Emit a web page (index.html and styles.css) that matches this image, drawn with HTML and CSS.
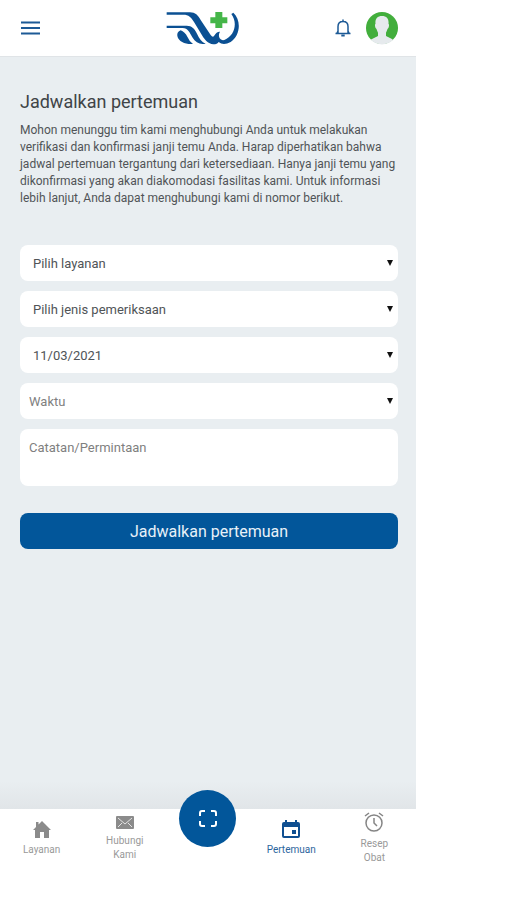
FILE: index.html
```html
<!DOCTYPE html>
<html lang="id">
<head>
<meta charset="utf-8">
<meta name="viewport" content="width=device-width, initial-scale=1">
<title>Jadwalkan pertemuan</title>
<link rel="stylesheet" href="styles.css">
</head>
<body>
<div class="app">
  <header class="topbar">
    <button class="icon-button" type="button" aria-label="Menu">
      <svg width="20" height="14" viewBox="0 0 20 14" fill="none" stroke="#1d5a96" stroke-width="2"><path d="M1 1.5H20M1 7H20M1 12.5H20"/></svg>
    </button>
    <a class="logo" href="#" aria-label="Beranda">
      <svg width="74" height="34" viewBox="46 33 222 102">
        <g fill="#0b5093">
          <path d="M48 37H118C134 37 142 46 150 60L180 105Q186 113 190 108Q198 94 208 95Q202 104 207 115Q211 122 221 120C252 108 262 68 242 42L248 38C272 60 270 105 240 126Q218 138 204 126Q200 133 188 133C172 131 164 122 154 106L130 66C122 52 114 44 98 44H48Z"/>
          <path d="M48 77H108C124 77 132 86 139 101C146 116 153 126 165 131C148 135 135 128 125 112C117 98 112 84 96 84H48Z"/>
          <path d="M90 91C98 94 106 102 110 110Q116 124 127 132C106 134 84 126 80 108Q78 96 90 91Z"/>
        </g>
        <path fill="#45b649" d="M194 36H215V52H230V70H215V84H194V70H179V52H194Z"/>
      </svg>
    </a>
    <div class="actions">
      <button class="icon-button" type="button" aria-label="Notifikasi">
        <svg width="16" height="20" viewBox="0 0 16 20" fill="none" stroke="#1d5a96" stroke-width="1.500"><path d="M3 15V8.500C3 5.500 5 3.500 8 3.500S13 5.500 13 8.500V15M.5 15.500H15.500M2 15L3 13M14 15L13 13M8 3.500V1.500"/><path d="M6.300 17.500H9.700" stroke-width="2"/></svg>
      </button>
      <button class="icon-button" type="button" aria-label="Profil">
        <svg width="32" height="34" viewBox="0 0 32 34">
          <circle cx="16" cy="17" r="16" fill="#42ae3c"/>
          <path fill="#e6eaed" d="M16 5C21 5 23 8 22.500 13C23.500 13 23 17 21.500 18C21 20 20 21 20 22V25L26 28Q27 29 27 29A16 16 0 0 1 5 29Q5 28 6 28L12 25V22C12 21 11 20 10.500 18C9 17 8.500 13 9.500 13C9 8 11 5 16 5Z"/>
        </svg>
      </button>
    </div>
  </header>

  <main class="content">
    <h1>Jadwalkan pertemuan</h1>
    <p class="intro">Mohon menunggu tim kami menghubungi Anda untuk melakukan verifikasi dan konfirmasi janji temu Anda. Harap diperhatikan bahwa jadwal pertemuan tergantung dari ketersediaan. Hanya janji temu yang dikonfirmasi yang akan diakomodasi fasilitas kami. Untuk informasi lebih lanjut, Anda dapat menghubungi kami di nomor berikut.</p>
    <form class="form">
      <div class="field"><select class="control" aria-label="Layanan"><option>Pilih layanan</option></select></div>
      <div class="field"><select class="control" aria-label="Jenis pemeriksaan"><option>Pilih jenis pemeriksaan</option></select></div>
      <div class="field"><select class="control" aria-label="Tanggal"><option>11/03/2021</option></select></div>
      <div class="field"><select class="control control-empty" aria-label="Waktu"><option>Waktu</option></select></div>
      <textarea class="control notes" aria-label="Catatan/Permintaan" placeholder="Catatan/Permintaan"></textarea>
      <button class="submit" type="submit">Jadwalkan pertemuan</button>
    </form>
  </main>

  <nav class="tabs">
    <a class="tab" href="#">
      <svg width="18" height="18" viewBox="0 0 18 18" fill="#8b8b8b"><path d="M9 1L18 10H16V18H11V12H7V18H2V10H0L3 7V2H5.500V4.500Z"/></svg>
      <span>Layanan</span>
    </a>
    <a class="tab" href="#">
      <svg width="18" height="13" viewBox="0 0 18 13"><rect width="18" height="13" rx="1" fill="#8b8b8b"/><path d="M2 2L9 8L16 2M2 11L6 7M16 11L12 7" fill="none" stroke="#e4e4e4"/></svg>
      <span>Hubungi Kami</span>
    </a>
    <div class="scan-slot">
      <button class="scan" type="button" aria-label="Pindai">
        <svg width="18" height="17" viewBox="0 0 18 17" fill="none" stroke="#fff" stroke-width="2"><path d="M1 6V3Q1 1 3 1H6M12 1H15Q17 1 17 3V6M17 11V14Q17 16 15 16H12M6 16H3Q1 16 1 14V11"/></svg>
      </button>
    </div>
    <a class="tab tab-active" href="#" aria-current="page">
      <svg width="18" height="18" viewBox="0 0 18 18" fill="#0f4f91"><path fill-rule="evenodd" d="M3 0H5V2H13V0H15V2H16Q18 2 18 4V16Q18 18 16 18H2Q0 18 0 16V4Q0 2 2 2H3ZM2 7V16H16V7Z"/><path d="M10 10H14V14H10Z"/></svg>
      <span>Pertemuan</span>
    </a>
    <a class="tab" href="#">
      <svg width="20" height="20" viewBox="0 0 20 20" fill="none" stroke="#858585" stroke-width="1.500"><circle cx="10" cy="11" r="8"/><path d="M10 6V11L13 14M1 4L5 1M19 4L15 1"/></svg>
      <span>Resep Obat</span>
    </a>
  </nav>
</div>
</body>
</html>
```
FILE: styles.css
```css
* { box-sizing: border-box; }

body {
  margin: 0;
  background: #fff;
  color: #505457;
  font-family: Roboto, "Liberation Sans", sans-serif;
}

button, select, textarea { font: inherit; }

a { color: inherit; text-decoration: none; }

svg { display: block; flex: none; }

.app {
  display: flex;
  flex-direction: column;
  max-width: 416px;
  min-height: 100vh;
  padding-bottom: 28px;
}

.topbar {
  display: grid;
  grid-template-columns: 12fr auto 13fr;
  align-items: center;
  padding: 11px 18px 11px 20px;
  border-bottom: 1px solid #e0e4e7;
}

.icon-button {
  padding: 0;
  border: 0;
  background: none;
  justify-self: start;
}

.actions {
  display: flex;
  align-items: center;
  justify-content: flex-end;
  gap: 15px;
}

.content {
  flex: 1;
  padding: 33px 18px 24px 20px;
  background: linear-gradient(#e9eef1 calc(100% - 28px), #e1e5e8);
}

h1 {
  margin: 0;
  font-size: 18px;
  line-height: 24px;
  font-weight: 400;
  color: #404447;
}

.intro {
  margin: 8px 0 38px;
  font-size: 12px;
  line-height: 17px;
}

.form {
  display: flex;
  flex-direction: column;
  gap: 10px;
}

.field { display: grid; position: relative; }

.field::after {
  content: "";
  position: absolute;
  right: 5px;
  top: 15px;
  border: 3px solid transparent;
  border-top: 6px solid #111;
  border-bottom: 0;
  pointer-events: none;
}

.control {
  width: 100%;
  height: 36px;
  padding: 0 24px 0 13px;
  border: 0;
  border-radius: 8px;
  background: #fff;
  color: #505457;
  font-size: 13px;
  appearance: none;
}

.control-empty { padding-left: 9px; color: #7f7f7f; }

.notes {
  display: block;
  height: 57px;
  padding: 10px 9px;
  line-height: 18px;
  resize: vertical;
}

.notes::placeholder { color: #7f7f7f; }

.notes::-webkit-resizer { background: none; }

.submit {
  height: 36px;
  margin-top: 17px;
  border: 0;
  border-radius: 8px;
  background: #02569a;
  color: #e8f1f8;
  font-size: 16px;
}

.tabs {
  display: grid;
  grid-template-columns: repeat(5, minmax(0, 1fr));
  height: 63px;
}

.tab {
  display: flex;
  flex-direction: column;
  align-items: center;
  justify-content: center;
  gap: 5px;
  padding: 0 16px 4px;
  color: #999;
  font-size: 10px;
  line-height: 14px;
  text-align: center;
}

.tab-active { color: #2c659d; }

.scan-slot { display: flex; justify-content: center; }

.scan {
  display: grid;
  place-items: center;
  flex: none;
  width: 57px;
  height: 57px;
  margin-top: -19px;
  padding: 0;
  border: 0;
  border-radius: 50%;
  background: #02569a;
  z-index: 1;
}
```
